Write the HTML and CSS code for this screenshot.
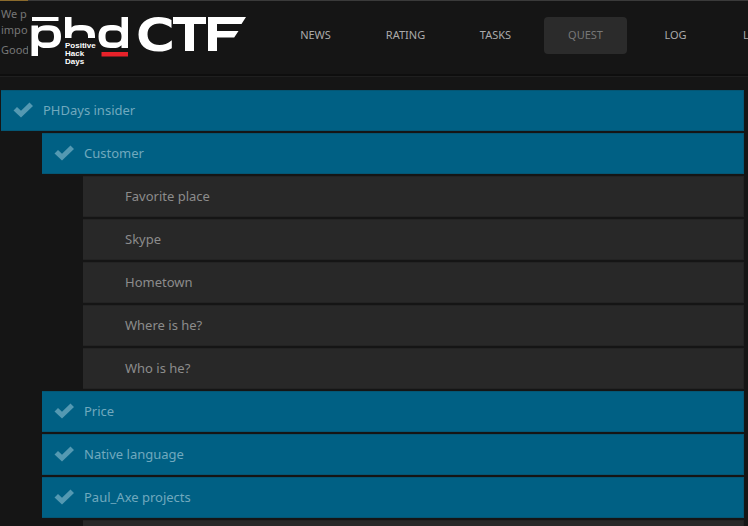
FILE: index.html
```html
<!DOCTYPE html>
<html lang="en">
<head>
<meta charset="utf-8">
<title>PHD CTF</title>
<link rel="stylesheet" href="styles.css">
</head>
<body>
<header class="top">
  <div class="intro"><p>We p<br>impo</p><p>Good</p></div>
  <div class="bar">
    <a class="logo" href="#" aria-label="PHD CTF">
      <svg width="216" height="52" viewBox="30 15 216 52">
        <g fill="#fff">
          <path d="M32 17h26.500v4H32z"/>
          <path fill-rule="evenodd" d="M31.500 56V25.500H38V28c2-2 4.500-2.800 8-2.800h3c8 0 12 3.800 12 11.300S57 48 49 48h-3c-3.500 0-6-.8-8-2.800V56zM44 30.500c-4 0-6 1.500-6 6s2 6 6 6h4c4.500 0 6-1.500 6-6s-1.500-6-6-6z"/>
          <path d="M65 17h6.500v10.500c2-1.800 4.500-2.500 8-2.500h3C91 25 95 28.500 95 36v2h-7v-1.500c0-4.200-2-6-6-6h-4.500c-4 0-6 1.800-6 6V38H65z"/>
          <path fill-rule="evenodd" d="M121.500 17h6.500v31h-6.500v-2.800c-2 2-4.500 2.800-8 2.800h-3c-8 0-12-3.800-12-11.500S102.500 25 110.500 25h3c3.500 0 6 .8 8 2.700zM111.500 30.500c-4.500 0-6 1.500-6 6s1.500 6 6 6h4c4 0 6-1.500 6-6s-2-6-6-6z"/>
          <path d="M171.500 20v8c-4-3-8-4.500-12-4.500-7.500 0-12 4.300-12 10.800S152 45 159.500 45c4.500 0 8-1.500 12.300-4.800v8C168 50.700 164 51.500 158.500 51.500c-12.500 0-20-6.500-20-17S146.500 17 158.500 17c5 0 9 .8 13 3z"/>
          <path d="M173 17h33v7h-12v27h-9V24h-12z"/>
          <path d="M208 17h38l-4.500 7H217v7h21.500l-4.300 6.500H217V51h-9z"/>
        </g>
        <path fill="#e8222a" d="M101.500 52H128v4.500h-26.500z"/>
        <g class="tag"><text x="65" y="48">Positive</text><text x="65" y="56">Hack</text><text x="65" y="64">Days</text></g>
      </svg>
    </a>
    <nav class="nav">
      <a href="#">NEWS</a>
      <a href="#">RATING</a>
      <a href="#">TASKS</a>
      <a href="#" class="active" aria-current="page">QUEST</a>
      <a href="#">LOG</a>
      <a href="#">LOGOUT</a>
    </nav>
  </div>
</header>
<svg class="defs" width="0" height="0" aria-hidden="true"><symbol id="check" viewBox="0 0 20 16"><path d="M.5 8.500 4 5l4 3.800L16.500.500 20 4 8 15.500z"/></symbol></svg>
<main class="quests">
  <div class="row done"><svg class="check"><use href="#check"/></svg>PHDays insider</div>
  <div class="group">
    <div class="row done"><svg class="check"><use href="#check"/></svg>Customer</div>
    <div class="group">
      <div class="row">Favorite place</div>
      <div class="row">Skype</div>
      <div class="row">Hometown</div>
      <div class="row">Where is he?</div>
      <div class="row">Who is he?</div>
    </div>
    <div class="row done"><svg class="check"><use href="#check"/></svg>Price</div>
    <div class="row done"><svg class="check"><use href="#check"/></svg>Native language</div>
    <div class="row done"><svg class="check"><use href="#check"/></svg>Paul_Axe projects</div>
    <div class="group">
      <div class="row"></div>
    </div>
  </div>
</main>
</body>
</html>
```
FILE: styles.css
```css
* { box-sizing: border-box; }
html { height: 100%; overflow: hidden; }
body {
  margin: 0;
  height: 100%;
  overflow: hidden;
  background: #151515;
  color: #8c8c8c;
  font: 13px/16px "Noto Sans", "Open Sans", sans-serif;
}
.top {
  display: flex;
  height: 76px;
  border-bottom: 2px solid #0e0e0e;
  box-shadow: 0 1px 0 #1f1f1f;
}
.intro {
  flex: 0 0 28px;
  overflow: hidden;
  padding: 5px 0 0 1px;
  border-top: 1px solid #8a6a2c;
  color: #777;
  font-size: 11px;
  white-space: nowrap;
}
.intro p { margin: 0 0 4px; }
.bar {
  flex: 1;
  min-width: 0;
  display: flex;
  align-items: flex-start;
  border-top: 1px solid #3a3a3a;
}
.logo { flex: none; margin: 14px 0 0 2px; }
.logo svg { display: block; }
.tag { fill: #fff; font: bold 8px "Liberation Sans", sans-serif; }
.nav {
  flex: none;
  display: flex;
  gap: 7px;
  margin: 16px 0 0 28px;
}
.nav a {
  width: 83px;
  height: 37px;
  border-radius: 4px;
  color: #aaa;
  font-size: 11px;
  line-height: 35px;
  text-align: center;
  text-decoration: none;
}
.nav .active { background: #2b2b2b; color: #777; }
.defs { display: block; }
.quests { margin: 14px 4px 0 1px; }
.group { margin-left: 41px; }
.row {
  display: flex;
  align-items: center;
  height: 41px;
  margin-bottom: 2px;
  padding: 0 0 2px 42px;
  border: 1px solid #232323;
  border-left: 0;
  background: #282828;
}
.row.done {
  padding-left: 12px;
  border-color: #045674;
  background: #006084;
  color: #70a9be;
}
.check {
  width: 20px;
  height: 16px;
  margin-right: 10px;
  fill: #5499b2;
}
```
